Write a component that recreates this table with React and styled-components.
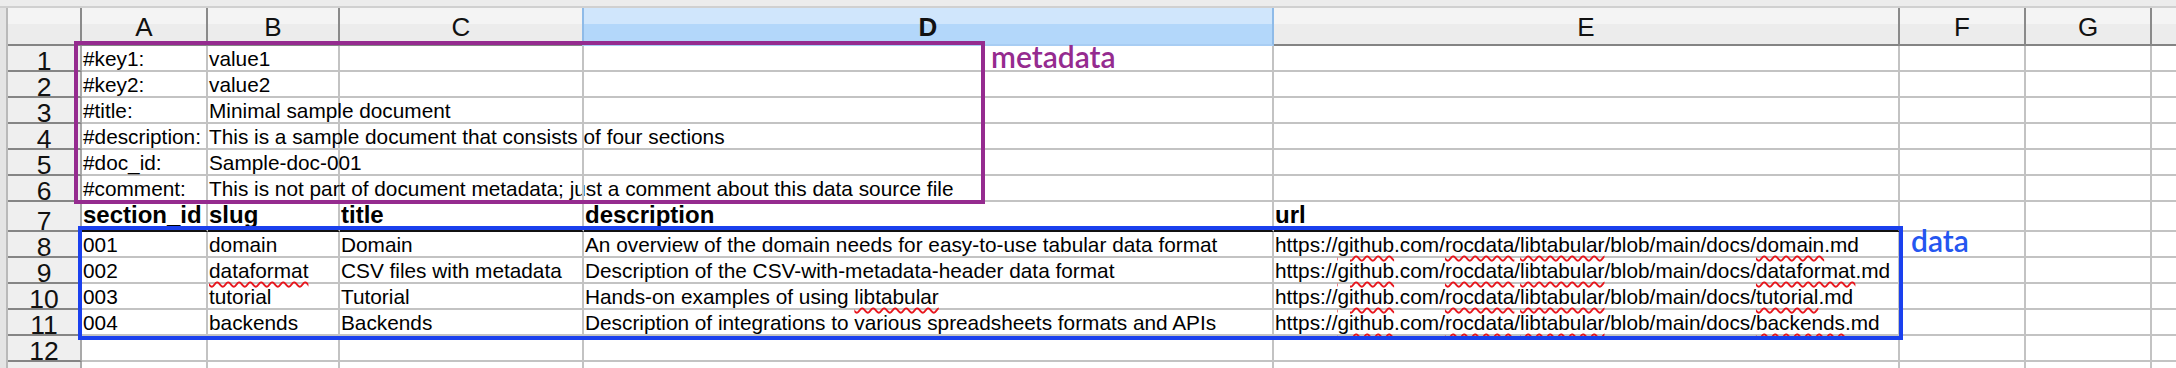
import React from "react";
import styled, { createGlobalStyle } from "styled-components";

const GlobalStyle = createGlobalStyle`
  body {
    margin: 0;
    background: #fff;
  }
`;

// strip, row header, A..G, H (cut off)
const COLS = "8px 74px 126px 132px 244px 690px 626px 126px 126px 126px";
const LETTERS = ["A", "B", "C", "D", "E", "F", "G", ""];
const SELECTED = "D";

const url = (name) =>
  `https://~github~.com/~rocdata~/~libtabular~/blob/main/docs/~${name}~.md`;

const ROWS = [
  { n: 1, cells: ["#key1:", "value1"] },
  { n: 2, cells: ["#key2:", "value2"] },
  { n: 3, cells: ["#title:", "Minimal sample document"] },
  { n: 4, cells: ["#description:", "This is a sample document that consists of four sections"] },
  { n: 5, cells: ["#doc_id:", "Sample-doc-001"] },
  { n: 6, cells: ["#comment:", "This is not part of document metadata; just a comment about this data source file"] },
  { n: 7, head: true, cells: ["section_id", "slug", "title", "description", "url"] },
  { n: 8, cells: ["001", "domain", "Domain", "An overview of the domain needs for easy-to-use tabular data format", url("domain")] },
  { n: 9, cells: ["002", "~dataformat~", "CSV files with metadata", "Description of the CSV-with-metadata-header data format", url("dataformat")] },
  { n: 10, cells: ["003", "tutorial", "Tutorial", "Hands-on examples of using ~libtabular~", url("tutorial")] },
  { n: 11, cells: ["004", "backends", "Backends", "Description of integrations to various spreadsheets formats and APIs", url("backends")] },
  { n: 12, cells: [] },
  { n: 13, cells: [] },
];

const Sheet = styled.div`
  position: relative;
  width: 2176px;
  height: 368px;
  overflow: hidden;
  background: #fff;
  font-family: "Liberation Sans", Arial, sans-serif;
`;

const TopStrip = styled.div`
  height: 6px;
  background: #ececec;
  border-bottom: 2px solid #d0d0d0;
`;

const Row = styled.div`
  display: grid;
  grid-template-columns: ${COLS};
  height: ${(p) => p.$h}px;
`;

const Strip = styled.div`
  background: #e4e4e4;
  border-right: 2px solid #b9b9b9;
`;

const Corner = styled.div`
  background: linear-gradient(#f4f4f4 0 45%, #ececec 45% 100%);
  border-right: 2px solid #8a8a8a;
  border-bottom: 2px solid #848484;
`;

const ColHead = styled.div`
  display: flex;
  align-items: flex-end;
  justify-content: center;
  padding-bottom: 8px;
  font-size: 26px;
  line-height: 18px;
  color: #111;
  font-weight: ${(p) => (p.$sel ? 700 : 400)};
  background: ${(p) =>
    p.$sel
      ? "linear-gradient(#d0e6fc 0 45%, #b3d7fa 45% 100%)"
      : "linear-gradient(#f4f4f4 0 45%, #ececec 45% 100%)"};
  border-right: 2px solid ${(p) => (p.$sel ? "#8fbbe8" : "#8a8a8a")};
  border-bottom: 2px solid ${(p) => (p.$sel ? "#a8cdf3" : "#848484")};
  border-left: ${(p) => (p.$sel ? "2px solid #8fbbe8" : "none")};
  margin-left: ${(p) => (p.$sel ? "-2px" : "0")};
`;

const RowHead = styled.div`
  display: flex;
  align-items: flex-end;
  justify-content: center;
  font-size: 26.5px;
  line-height: 18px;
  color: #111;
  background: #efefef;
  border-right: 2px solid #a9a9a9;
  border-bottom: 2px solid #858585;
`;

const Cell = styled.div`
  display: flex;
  align-items: flex-end;
  min-width: 0;
  padding: 0 0 ${(p) => (p.$bold ? "3px" : "0")} 1px;
  font-size: ${(p) => (p.$bold ? "24px" : "20.8px")};
  font-weight: ${(p) => (p.$bold ? 700 : 400)};
  line-height: 1;
  white-space: nowrap;
  color: #000;
  border-right: 2px solid #c3c3c3;
  border-bottom: 2px solid ${(p) => (p.$rule ? "#111" : "#c3c3c3")};
`;

const Value = styled.span`
  white-space: pre;
`;

const Squiggle = styled.span`
  text-decoration: underline wavy #e8161d;
  text-decoration-thickness: 1.5px;
  text-underline-offset: 3px;
`;

const Frame = styled.div`
  position: absolute;
  box-sizing: border-box;
  border: 4px solid ${(p) => p.$color};
  pointer-events: none;
`;

const Label = styled.div`
  position: absolute;
  font-family: Lato, "Open Sans", sans-serif;
  font-weight: 600;
  font-size: 30px;
  line-height: 1;
  color: ${(p) => p.$color};
`;

const Text = ({ value }) => (
  <Value>
    {value
      .split("~")
      .map((part, i) => (i % 2 ? <Squiggle key={i}>{part}</Squiggle> : part))}
  </Value>
);

const App = () => (
  <Sheet>
    <GlobalStyle />
    <TopStrip />
    <Row $h={38}>
      <Strip />
      <Corner />
      {LETTERS.map((l, i) => (
        <ColHead key={i} $sel={l === SELECTED}>
          {l}
        </ColHead>
      ))}
    </Row>
    {ROWS.map((row) => (
      <Row key={row.n} $h={row.head ? 30 : 26}>
        <Strip />
        <RowHead>{row.n}</RowHead>
        {LETTERS.map((_, i) => (
          <Cell key={i} $bold={row.head} $rule={row.head && i < 5}>
            {row.cells[i] && <Text value={row.cells[i]} />}
          </Cell>
        ))}
      </Row>
    ))}

    <Frame $color="#952b8f" style={{ left: 74, top: 41, width: 911, height: 163 }} />
    <Label $color="#952b8f" style={{ left: 991, top: 41 }}>
      metadata
    </Label>

    <Frame $color="#1a40ee" style={{ left: 78, top: 226, width: 1825, height: 114 }} />
    <Label $color="#2456f0" style={{ left: 1911, top: 225 }}>
      data
    </Label>
  </Sheet>
);

export default App;
